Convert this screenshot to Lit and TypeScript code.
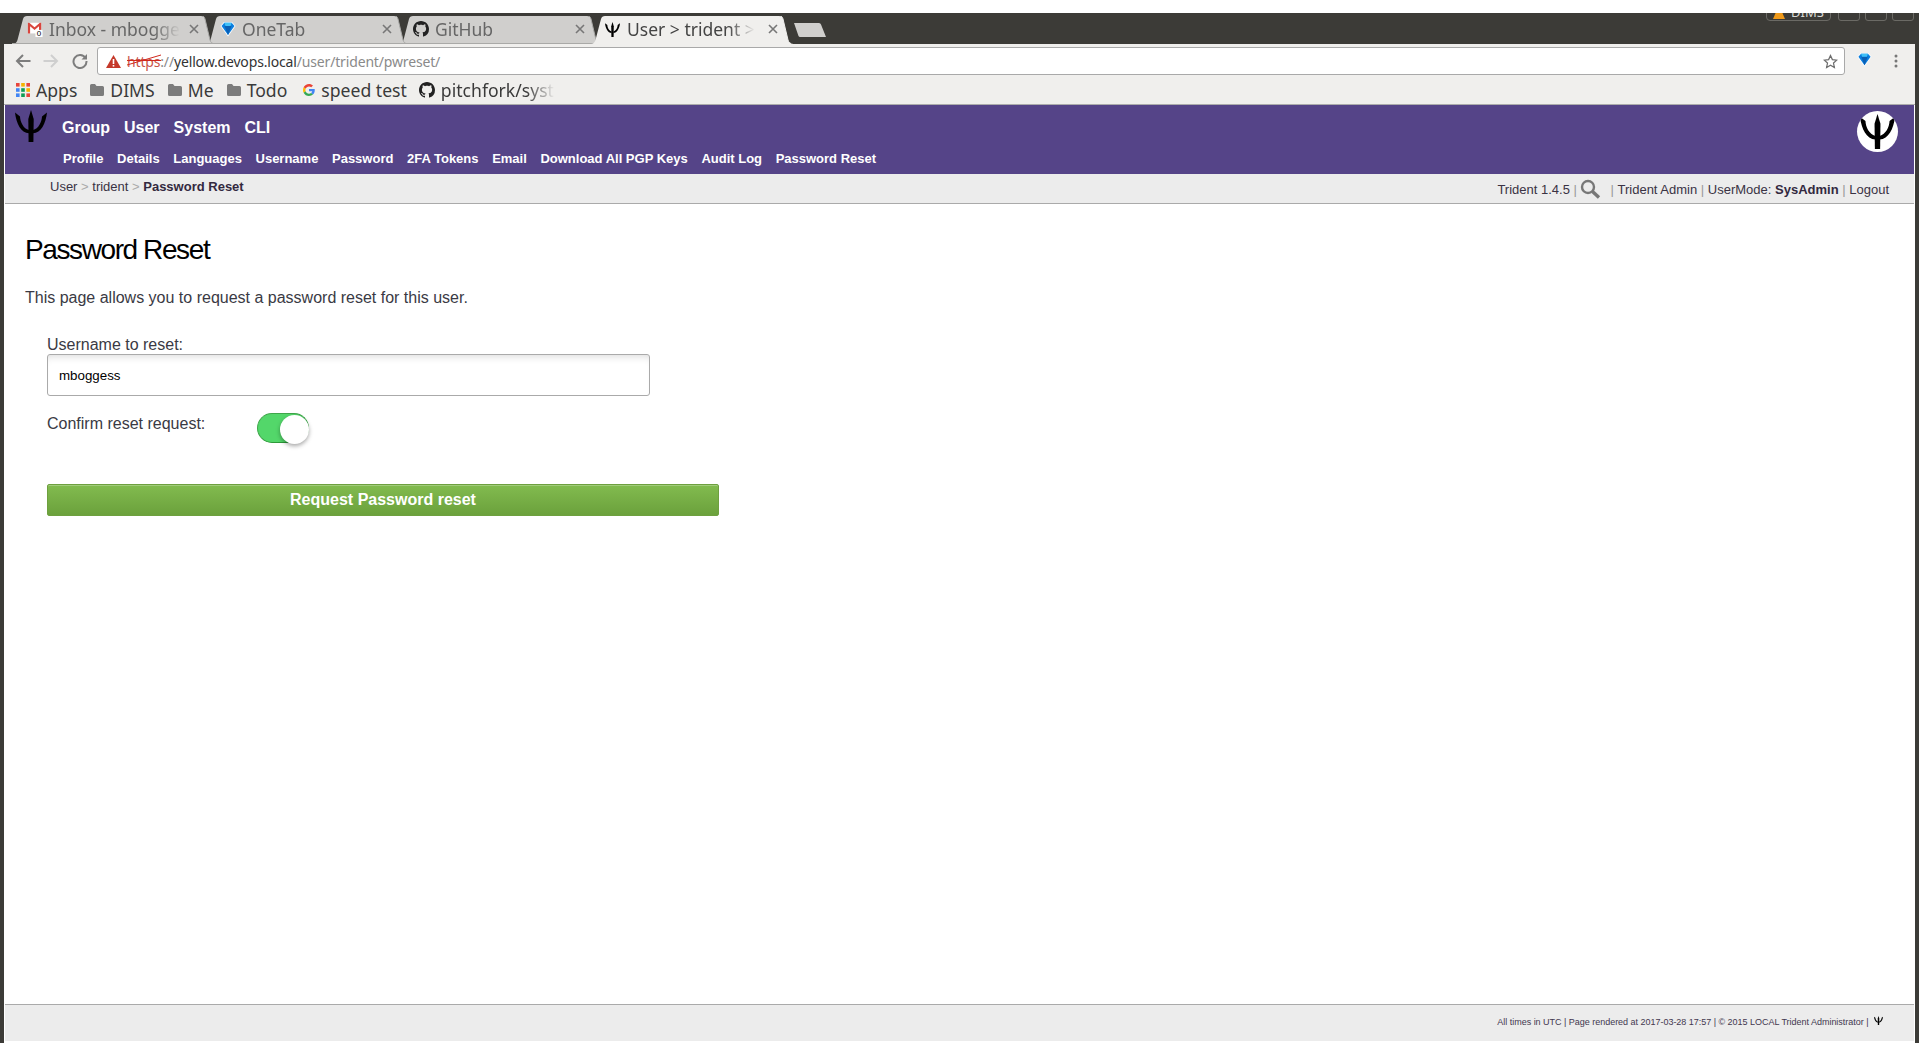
import { LitElement, html, css, svg } from 'lit';
import { customElement } from 'lit/decorators.js';

const GH_PATH =
  'M8 0C3.58 0 0 3.58 0 8c0 3.54 2.29 6.53 5.47 7.59.4.07.55-.17.55-.38 0-.19-.01-.82-.01-1.49-2.01.37-2.53-.49-2.69-.94-.09-.23-.48-.94-.82-1.13-.28-.15-.68-.52-.01-.53.63-.01 1.08.58 1.23.82.72 1.21 1.87.87 2.33.66.07-.52.28-.87.51-1.07-1.78-.2-3.64-.89-3.64-3.95 0-.87.31-1.59.82-2.15-.08-.2-.36-1.02.08-2.12 0 0 .67-.21 2.2.82.64-.18 1.32-.27 2-.27.68 0 1.36.09 2 .27 1.53-1.04 2.2-.82 2.2-.82.44 1.1.16 1.92.08 2.12.51.56.82 1.27.82 2.15 0 3.07-1.87 3.75-3.65 3.95.29.25.54.73.54 1.48 0 1.07-.01 1.93-.01 2.2 0 .21.15.46.55.38A8.013 8.013 0 0016 8c0-4.42-3.58-8-8-8z';

const trident = (size: number) => html`<svg width=${size} height=${size} viewBox="0 0 32 32" fill="#000">
  <path d="M16 0L18.700 9L18.400 32H13.600L13.300 9Z" />
  <path d="M0 2.500L5 6.500C5.200 12 8.500 18.800 14 20V23.300C6 23 1.200 13.500 0 2.500Z" />
  <path d="M32 2.500L27 6.500C26.800 12 23.500 18.800 18 20V23.300C26 23 30.800 13.500 32 2.500Z" />
</svg>`;

const github = (size: number) => html`<svg width=${size} height=${size} viewBox="0 0 16 16" fill="#222"><path d=${GH_PATH} /></svg>`;

const gem = (size: number) => html`<svg width=${size} height=${size} viewBox="0 0 16 16">
  <path d="M.5 5L4 1H12L15.500 5L8 15.500Z" fill="#fff" />
  <path d="M1.500 5L4.300 1.800H11.700L14.500 5L8 14Z" fill="#0b7fe0" />
  <path d="M4.500 5H11.500L8 14Z" fill="#0a5fb5" />
  <path d="M4.300 1.800H11.700L10.500 5H5.500Z" fill="#3fc0f7" />
</svg>`;

const gmail = html`<svg width="18" height="18" viewBox="0 0 18 18">
  <rect x="1" y="2" width="15" height="12" fill="#fff" />
  <path d="M1 14V2H2.500L8.500 7L14.500 2H16V14H13.500V6L8.500 10L3.500 6V14Z" fill="#d9453d" />
  <rect x="9.500" y="10" width="8" height="8" fill="#fff" />
  <text x="13.500" y="17" font-size="9" text-anchor="middle" font-family="Liberation Sans" fill="#000">0</text>
</svg>`;

const folder = html`<svg width="14" height="12" viewBox="0 0 14 12" fill="#7c7c7c"><path d="M0 1.500Q0 0 1.500 0H5L6.500 2H12.500Q14 2 14 3.500V10.500Q14 12 12.500 12H1.500Q0 12 0 10.500Z" /></svg>`;

const appsColors = ['#e8453c', '#f4b400', '#e8453c', '#4285f4', '#0f9d58', '#f4b400', '#4285f4', '#0f9d58', '#e8453c'];
const apps = html`<svg width="14" height="14" viewBox="0 0 14 14">
  ${appsColors.map((c, i) => svg`<rect x=${(i % 3) * 5.2} y=${Math.floor(i / 3) * 5.2} width="3.6" height="3.6" fill=${c} />`)}
</svg>`;

const google = html`<svg width="12" height="12" viewBox="0 0 48 48">
  <path fill="#ea4335" d="M24 9.500c3.500 0 6.700 1.300 9.100 3.500l6.800-6.800C35.800 2.400 30.300 0 24 0 14.600 0 6.500 5.400 2.600 13.200l7.900 6.200C12.400 13.700 17.700 9.500 24 9.500z" />
  <path fill="#4285f4" d="M47 24.500c0-1.600-.1-3.100-.4-4.500H24v9h13c-.6 3-2.200 5.500-4.800 7.200l7.700 6C44.400 38 47 31.800 47 24.500z" />
  <path fill="#fbbc05" d="M10.500 28.600c-.5-1.400-.8-3-.8-4.600s.3-3.200.8-4.600l-7.900-6.200C.9 16.500 0 20.100 0 24s.9 7.500 2.600 10.800z" />
  <path fill="#34a853" d="M24 48c6.500 0 11.900-2.100 15.900-5.800l-7.700-6c-2.100 1.400-4.900 2.300-8.200 2.300-6.300 0-11.600-4.200-13.500-9.900l-7.900 6.200C6.500 42.600 14.600 48 24 48z" />
</svg>`;

const bookmarks = [
  { icon: apps, label: 'Apps', cls: 'b-apps' },
  { icon: folder, label: 'DIMS', cls: '' },
  { icon: folder, label: 'Me', cls: '' },
  { icon: folder, label: 'Todo', cls: '' },
  { icon: google, label: 'speed test', cls: 'b-g' },
  { icon: github(16), label: 'pitchfork/syst', cls: 'b-fade' },
];

const tabs = [
  { icon: gmail, label: 'Inbox - mbogges', cls: 't1' },
  { icon: gem(16), label: 'OneTab', cls: 't2' },
  { icon: github(16), label: 'GitHub', cls: 't3' },
  { icon: trident(15), label: 'User > trident > Password Reset', cls: 't4 active' },
];

const mainNav = ['Group', 'User', 'System', 'CLI'];
const subNav = ['Profile', 'Details', 'Languages', 'Username', 'Password', '2FA Tokens', 'Email', 'Download All PGP Keys', 'Audit Log', 'Password Reset'];

@customElement('app-root')
export class AppRoot extends LitElement {
  static styles = css`
    :host {
      display: block;
      width: 1919px;
      height: 1056px;
      background: #fff;
      overflow: hidden;
      font-family: 'Liberation Sans', Arial, sans-serif;
      color: #333;
    }
    .window {
      margin-top: 13px;
      height: 1030px;
      box-sizing: border-box;
      padding: 0 4px;
      background: #3c3b37;
      display: flex;
      flex-direction: column;
    }

    /* tab strip */
    .strip {
      height: 31px;
      flex: none;
      position: relative;
      overflow: hidden;
      display: flex;
      align-items: flex-end;
      padding-left: 8px;
      font-family: 'Noto Sans', sans-serif;
    }
    .tab {
      position: relative;
      width: 205px;
      height: 28px;
      margin-right: -12px;
      flex: none;
      display: flex;
      align-items: center;
      box-sizing: border-box;
      padding: 0 18px 2px 15px;
      font-size: 17.5px;
      color: #666;
    }
    .tab .shape { position: absolute; left: 0; top: 0; }
    .tab > :not(.shape) { position: relative; }
    .t1 { z-index: 3; }
    .t2 { z-index: 2; }
    .t3 { z-index: 1; }
    .t4 { z-index: 4; width: 206px; margin-left: -1px; color: #444; }
    .tab-icon { width: 16px; height: 18px; flex: none; display: flex; align-items: center; margin-right: 6px; }
    .tab-title {
      flex: 1;
      overflow: hidden;
      white-space: nowrap;
      -webkit-mask-image: linear-gradient(to right, #000 78%, transparent 98%);
      mask-image: linear-gradient(to right, #000 78%, transparent 98%);
    }
    .t4 .tab-title {
      -webkit-mask-image: linear-gradient(to right, #000 75%, transparent 95%);
      mask-image: linear-gradient(to right, #000 75%, transparent 95%);
    }
    .tab-close { width: 10px; margin-left: 6px; flex: none; color: #777; line-height: 0; }
    .new-tab { margin-left: 9px; margin-bottom: 7px; flex: none; line-height: 0; }
    .win-controls {
      position: absolute;
      right: 1px;
      top: -10px;
      display: flex;
      gap: 5px;
    }
    .win-badge {
      width: 63px;
      height: 16px;
      border: 1px solid #6b6a65;
      border-radius: 4px;
      margin-right: 2px;
      display: flex;
      align-items: center;
      justify-content: center;
      gap: 6px;
      color: #d8d8d4;
      font-size: 13px;
    }
    .win-btn {
      width: 20px;
      height: 16px;
      border: 1px solid #6b6a65;
      border-radius: 3px;
    }

    /* toolbar */
    .toolbar {
      height: 61px;
      flex: none;
      box-sizing: border-box;
      background: #f0efed;
      border-bottom: 1px solid #acacac;
      font-family: 'Noto Sans', sans-serif;
      display: flex;
      flex-direction: column;
    }
    .nav-row {
      height: 34px;
      flex: none;
      display: flex;
      align-items: center;
      padding-left: 11px;
    }
    .nav-row svg { flex: none; }
    .nav-fwd { margin-left: 12px; }
    .nav-reload { margin-left: 13px; }
    .omni {
      margin-left: 9px;
      width: 1748px;
      height: 28px;
      box-sizing: border-box;
      background: #fff;
      border: 1px solid #a9a9a9;
      border-radius: 3px;
      display: flex;
      align-items: center;
      padding: 0 6px 0 8px;
      font-size: 14px;
      color: #8a8a8a;
      letter-spacing: -0.16px;
    }
    .omni .warn { margin-right: 6px; flex: none; }
    .omni .scheme { position: relative; color: #c9554a; }
    .omni .scheme svg { position: absolute; left: 0; top: 2px; }
    .omni .host { color: #333; }
    .omni .spacer { flex: 1; }
    .ext { margin-left: 12px; }
    .dots { margin-left: 22px; }
    .bm-row {
      flex: 1;
      display: flex;
      align-items: center;
      padding: 0 0 6px 12px;
      font-size: 17.6px;
      color: #3a3a3a;
      gap: 13px;
    }
    .bm { display: flex; align-items: center; gap: 6px; white-space: nowrap; }
    .b-g { margin-left: 3px; }
    .b-fade { margin-left: -1px; }
    .b-fade span {
      display: block;
      width: 114px;
      overflow: hidden;
      -webkit-mask-image: linear-gradient(to right, #000 75%, transparent 100%);
      mask-image: linear-gradient(to right, #000 75%, transparent 100%);
    }

    /* page */
    .page {
      flex: 1;
      min-height: 0;
      background: #fff;
      padding: 0 1px 2px;
      display: flex;
      flex-direction: column;
    }
    .head {
      height: 69px;
      flex: none;
      box-sizing: border-box;
      background: #554488;
      display: flex;
      justify-content: space-between;
      padding: 5px 16px 0 10px;
    }
    .head-brand { display: flex; }
    .head-logo { line-height: 0; }
    .menus { margin-left: 15px; }
    .main-nav {
      display: flex;
      gap: 14px;
      font-size: 16px;
      font-weight: bold;
      color: #fff;
      padding-top: 8px;
      line-height: 20px;
    }
    .sub-nav {
      display: flex;
      gap: 13.6px;
      font-size: 13px;
      font-weight: bold;
      color: #fff;
      padding: 13px 0 0 1px;
      line-height: 16px;
      white-space: nowrap;
    }
    .badge-logo {
      width: 41px;
      height: 41px;
      margin-top: 1px;
      border-radius: 50%;
      background: #fff;
      overflow: hidden;
      display: flex;
      align-items: center;
      justify-content: center;
    }
    .crumbs {
      height: 30px;
      flex: none;
      box-sizing: border-box;
      background: #ececec;
      border-bottom: 1px solid #aaa;
      display: flex;
      justify-content: space-between;
      padding: 5px 25px 0 45px;
      font-size: 13px;
      line-height: 15px;
      color: #3a3344;
    }
    .crumbs .sep { color: #aaa; }
    .crumbs b { color: #33293f; }
    .status { display: flex; align-items: center; height: 20px; white-space: pre; }
    .status .pipe { color: #999; }
    .status svg { margin: 0 6px 0 3px; }
    .content {
      flex: 1;
      padding: 30px 20px 0;
    }
    h1 {
      margin: 0;
      font-size: 28px;
      font-weight: normal;
      line-height: 32px;
      letter-spacing: -1.4px;
      color: #000;
    }
    .intro { margin: 22px 0 0; font-size: 16px; line-height: 20px; color: #3a3a44; }
    form { margin: 28px 0 0 22px; width: 672px; font-size: 16px; color: #3a3a44; }
    .field-label { line-height: 18px; }
    .text-input {
      width: 603px;
      height: 42px;
      box-sizing: border-box;
      border: 1px solid #aaa;
      border-radius: 3px;
      background: #fff;
      box-shadow: inset 0 7px 9px -6px rgba(0, 0, 0, 0.16);
      padding: 0 11px;
      font: 13.33px 'Liberation Sans', sans-serif;
      color: #000;
      display: block;
      outline: none;
    }
    .confirm { display: flex; align-items: flex-start; margin-top: 16px; height: 31px; }
    .confirm label { width: 210px; line-height: 22px; padding-top: 1px; }
    .switch {
      position: relative;
      width: 52px;
      height: 30px;
      margin-top: 1px;
      box-sizing: border-box;
      border-radius: 15px;
      background: #53d76a;
      border: 1px solid #3fa64a;
      border-bottom-color: #2e9a3a;
    }
    .switch::after {
      content: '';
      position: absolute;
      right: -1px;
      top: 1px;
      width: 29px;
      height: 29px;
      border-radius: 50%;
      background: #fff;
      box-shadow: 0 2px 4px rgba(0, 0, 0, 0.35);
    }
    .submit {
      margin-top: 41px;
      width: 672px;
      height: 32px;
      box-sizing: border-box;
      display: block;
      border: 1px solid #6ea03f;
      border-radius: 2px;
      background: linear-gradient(#82bb4f, #6ba13c);
      box-shadow: inset 0 1px 0 rgba(255, 255, 255, 0.25);
      color: #fff;
      font: bold 16px 'Liberation Sans', sans-serif;
      padding: 0;
    }
    footer {
      height: 37px;
      flex: none;
      box-sizing: border-box;
      background: #ececec;
      border-top: 1px solid #aaa;
      display: flex;
      justify-content: flex-end;
      align-items: center;
      gap: 3px;
      padding: 0 31px 2px 0;
      font-size: 9px;
      letter-spacing: -0.02px;
      color: #43384f;
      white-space: pre;
    }
    footer svg { margin-bottom: 3px; }
  `;

  private tabShape(active: boolean) {
    const fill = active ? '#f0efed' : '#d0cfcd';
    const stroke = active ? '#f0efed' : '#a9a9a7';
    return html`<svg class="shape" width="205" height="28" viewBox="0 0 205 28">
      <path d="M0 28C4 28 5 26 6 22L11 3C11.500 1 13 0 15 0H189C191 0 192.500 1 193 3L198 24C199 27 201 28 205 28Z" fill=${fill} />
      <path d="M190 0C191.500 0 192.500 1 193 3L198 24C198.600 26 199.500 27 201 27.500" fill="none" stroke=${stroke} />
      ${active ? '' : svg`<path d="M0 27.500H203" stroke=${stroke} />`}
    </svg>`;
  }

  render() {
    return html`
      <div class="window">
        <div class="strip">
          ${tabs.map(
            (t) => html`<div class="tab ${t.cls}">
              ${this.tabShape(t.cls.includes('active'))}
              <span class="tab-icon">${t.icon}</span>
              <span class="tab-title">${t.label}</span>
              <span class="tab-close">
                <svg width="10" height="10" viewBox="0 0 10 10" stroke="#777" stroke-width="1.6"><path d="M1 1L9 9M9 1L1 9" /></svg>
              </span>
            </div>`
          )}
          <span class="new-tab">
            <svg width="34" height="14" viewBox="0 0 34 14"><path d="M1 0H26Q27.500 0 28 1.500L33 14H7Q6 14 5.500 13Z" fill="#d0cfcd" /></svg>
          </span>
          <div class="win-controls">
            <div class="win-badge">
              <svg width="12" height="14" viewBox="0 0 12 14"><path d="M6 0L12 14H0Z" fill="#f09a1a" /></svg>
              DIMS
            </div>
            <div class="win-btn"></div>
            <div class="win-btn"></div>
            <div class="win-btn"></div>
          </div>
        </div>

        <div class="toolbar">
          <div class="nav-row">
            <svg width="16" height="14" viewBox="0 0 16 14" fill="none" stroke="#7d7d7d" stroke-width="2"><path d="M15.500 7H2M8 1L2 7L8 13" /></svg>
            <svg class="nav-fwd" width="16" height="14" viewBox="0 0 16 14" fill="none" stroke="#cfcfcf" stroke-width="2"><path d="M.5 7H14M8 1L14 7L8 13" /></svg>
            <svg class="nav-reload" width="16" height="16" viewBox="0 0 16 16" fill="none" stroke="#7d7d7d" stroke-width="2"><path d="M13.500 5A6.500 6.500 0 1 0 14.500 8" /><path d="M15 1V6.500H9.500Z" fill="#7d7d7d" stroke="none" /></svg>
            <div class="omni">
              <svg class="warn" width="15" height="13" viewBox="0 0 15 13"><path d="M7.500 0L15 13H0Z" fill="#c5392a" /><rect x="6.700" y="4" width="1.600" height="5" fill="#fff" /><rect x="6.700" y="10" width="1.600" height="1.600" fill="#fff" /></svg>
              <span class="scheme">https<svg width="35" height="14" viewBox="0 0 35 14" fill="none" stroke="#d0281c"><path d="M0 11L34 1M0 6.500H34" /></svg></span><span>://</span><span class="host">yellow.devops.local</span><span>/user/trident/pwreset/</span>
              <span class="spacer"></span>
              <svg width="15" height="15" viewBox="0 0 24 24" fill="none" stroke="#6d6d6d" stroke-width="2"><path d="M12 2.500L15 9L22 9.800L16.800 14.500L18.200 21.500L12 18L5.800 21.500L7.200 14.500L2 9.800L9 9Z" /></svg>
            </div>
            <span class="ext">${gem(15)}</span>
            <svg class="dots" width="4" height="14" viewBox="0 0 4 14" fill="#777"><circle cx="2" cy="2" r="1.500" /><circle cx="2" cy="7" r="1.500" /><circle cx="2" cy="12" r="1.500" /></svg>
          </div>
          <div class="bm-row">
            ${bookmarks.map((b) => html`<div class="bm ${b.cls}">${b.icon}<span>${b.label}</span></div>`)}
          </div>
        </div>

        <div class="page">
          <header class="head">
            <div class="head-brand">
              <div class="head-logo">${trident(32)}</div>
              <div class="menus">
                <div class="main-nav">${mainNav.map((n) => html`<span>${n}</span>`)}</div>
                <div class="sub-nav">${subNav.map((n) => html`<span>${n}</span>`)}</div>
              </div>
            </div>
            <div class="badge-logo">${trident(35)}</div>
          </header>

          <div class="crumbs">
            <div>User <span class="sep">&gt;</span> trident <span class="sep">&gt;</span> <b>Password Reset</b></div>
            <div class="status">
              <span>Trident 1.4.5 </span><span class="pipe">|</span>
              <svg width="21" height="20" viewBox="0 0 21 20" fill="none" stroke="#777"><circle cx="8" cy="8" r="6" stroke-width="2.400" /><path d="M12.500 12.500L19 18.500" stroke-width="3.400" /></svg>
              <span class="pipe"> | </span><span>Trident Admin </span><span class="pipe">|</span><span> UserMode: </span><b>SysAdmin</b><span class="pipe"> | </span><span>Logout</span>
            </div>
          </div>

          <main class="content">
            <h1>Password Reset</h1>
            <p class="intro">This page allows you to request a password reset for this user.</p>
            <form>
              <div class="field-label">Username to reset:</div>
              <input class="text-input" type="text" value="mboggess" />
              <div class="confirm">
                <label>Confirm reset request:</label>
                <div class="switch"></div>
              </div>
              <button class="submit" type="button">Request Password reset</button>
            </form>
          </main>

          <footer>
            <span>All times in UTC | Page rendered at 2017-03-28 17:57 | © 2015 LOCAL Trident Administrator | </span>${trident(9)}
          </footer>
        </div>
      </div>
    `;
  }
}
